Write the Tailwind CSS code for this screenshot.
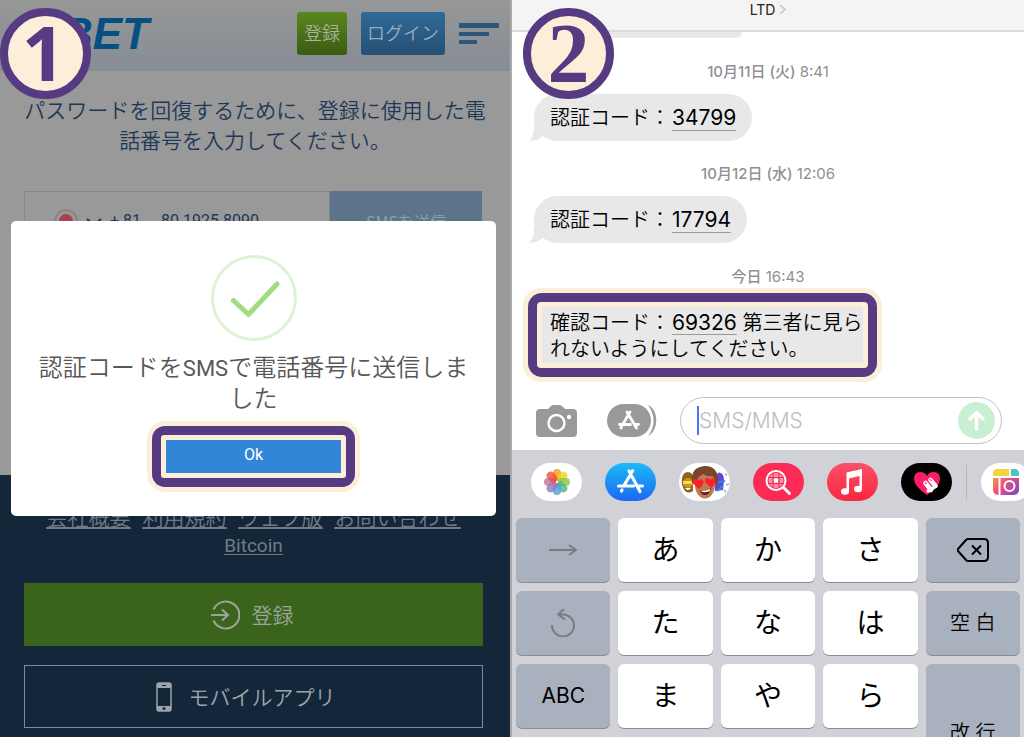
<!DOCTYPE html>
<html lang="ja">
<head>
<meta charset="utf-8">
<meta name="viewport" content="width=device-width, initial-scale=1">
<title>認証コード</title>
<script src="https://cdn.jsdelivr.net/npm/@tailwindcss/browser@4"></script>
</head>
<body class="bg-white">
<main class="grid h-screen grid-cols-2 overflow-hidden">

  <!-- Step 1: password recovery -->
  <section class="relative flex min-w-0 flex-col border-r-2 border-[#a9a9ab] bg-[#999] font-['Noto_Sans_CJK_JP',sans-serif] font-[350]">
    <header class="flex h-[71px] shrink-0 items-start bg-linear-to-b from-[#979797] to-[#868d94] pr-[11px] pl-[61px] pt-3">
      <a href="#" class="font-['Liberation_Sans',sans-serif] text-[44px] leading-[44px] font-bold text-[#064f83] italic">BET</a>
      <button class="ml-auto h-[43px] rounded-[3px] bg-linear-to-b from-[#5b8720] to-[#3a5b10] px-[7px] pb-1 text-lg text-[#a9b29c]">登録</button>
      <button class="ml-[14px] h-[43px] w-[84px] rounded-[3px] bg-linear-to-b from-[#2f6a98] to-[#264f74] pb-1 text-lg text-[#9dacb8]">ログイン</button>
      <button aria-label="メニュー" class="mt-[11px] ml-[14px] flex w-10 flex-col gap-1 text-[#2c577b]">
        <span class="h-[5px] w-10 bg-current"></span><span class="h-[4px] w-[30px] bg-current"></span><span class="h-[4px] w-[18px] bg-current"></span>
      </button>
    </header>
    <div class="flex-1 px-6 pt-[23px]">
      <p class="text-center text-[21px] leading-[30px] whitespace-nowrap text-[#1f3857]"><span class="-mx-2">パスワードを回復するために、登録に使用した電</span><br>話番号を入力してください。</p>
      <form class="mt-[37px] mr-1 flex h-[60px]">
        <div class="flex flex-1 items-center border border-[#7b8a8e] pl-[29px] text-[#1f3857]">
          <button type="button" aria-label="国番号" class="flex items-center">
            <svg class="size-6" viewBox="0 0 24 24"><circle cx="12" cy="12" r="11" fill="#999" stroke="#858585" stroke-width="2"/><circle cx="12" cy="12" r="7" fill="#a8404e"/></svg>
            <svg class="ml-2 h-3 w-4" viewBox="0 0 16 12" fill="none" stroke="currentColor" stroke-width="2"><path d="M1 4l7 6 7-6"/></svg>
            <span class="ml-2 font-['Roboto',sans-serif] text-base font-normal">+ 81</span>
          </button>
          <input type="tel" aria-label="電話番号" value="80 1925 8090" class="ml-5 w-32 font-['Roboto',sans-serif] text-base font-normal outline-none">
        </div>
        <button type="button" class="w-[152px] bg-[#5d7389] text-base text-[#8ea0b0]">SMSを送信</button>
      </form>
    </div>
    <footer class="shrink-0 bg-[#14263a] pt-[26px] pr-[27px] pb-[9px] pl-6 text-[#707b86]">
      <nav class="flex flex-wrap justify-center gap-x-3 text-[21px] leading-[30px] underline underline-offset-2">
        <a href="#">会社概要</a><a href="#">利用規約</a><a href="#">ウェブ版</a><a href="#">お問い合わせ</a><a href="#" class="font-['Roboto',sans-serif] text-[19px] leading-[30px] font-normal">Bitcoin</a>
      </nav>
      <button class="mt-[22px] flex h-[63px] w-full items-center justify-center gap-3 bg-[#3a641c] pr-1 text-[21px] text-[#9da59b]">
        <svg class="size-[30px]" viewBox="0 0 30 30" fill="none" stroke="currentColor" stroke-width="2"><path d="M3.500 9.500A13.500 13.500 0 1 1 3.500 20.500M1 15h17M12 9.500l6 5.500-6 5.500"/></svg>
        <span>登録</span>
      </button>
      <button class="mt-[19px] flex h-[63px] w-full items-center justify-center gap-[17px] border border-[#7e8994] pr-4 text-[21px] text-[#9da3a9]">
        <svg class="h-[30px] w-4" viewBox="0 0 16 30"><rect x="1" y="1" width="14" height="28" rx="2" fill="none" stroke="currentColor" stroke-width="1.500"/><path fill="currentColor" d="M1 1h14v5H1zM1 24h14v5H1z"/><path stroke="#14263a" d="M6 3.500h4"/><circle cx="8" cy="26.500" r="1.500" fill="#14263a"/></svg>
        <span>モバイルアプリ</span>
      </button>
    </footer>

    <div role="dialog" aria-label="送信完了" class="absolute top-[221px] right-[14px] left-[11px] flex h-[295px] flex-col items-center rounded-[5px] bg-white pt-[34px]">
      <svg class="size-[86px]" viewBox="0 0 86 86" fill="none"><circle cx="43" cy="43" r="41.500" stroke="#dff2d5" stroke-width="3"/><path d="M22.500 45.500L37.500 59.500 66 29" stroke="#a0dd80" stroke-width="5" stroke-linecap="round" stroke-linejoin="round"/></svg>
      <p class="mt-[9px] text-center text-2xl leading-[31px] whitespace-nowrap text-[#585858]">認証コードを<span class="font-['Roboto',sans-serif] text-[22px] leading-none font-normal">SMS</span>で電話番号に送信しま<br>した</p>
      <div class="mt-[9px] rounded-[18px] bg-[#fbefd9] p-[5px]">
        <div class="rounded-[13px] bg-[#563b82] p-[9px]">
          <div class="rounded-[3px] bg-[#fbefd9] p-[5px]">
            <button class="block h-[33px] w-[175px] bg-[#3186d8] pb-1 font-['Roboto',sans-serif] text-base leading-none font-normal text-white">Ok</button>
          </div>
        </div>
      </div>
    </div>
    <div class="absolute top-2 left-0 flex size-[91px] items-center justify-center rounded-full border-8 border-[#563b82] bg-[#fbefd9] pr-1 pb-1 font-['Noto_Sans',sans-serif] text-[76px] leading-none font-bold text-[#563b82]">1</div>
  </section>

  <!-- Step 2: messages -->
  <section class="relative flex min-w-0 flex-col bg-white font-['Inter','Noto_Sans_CJK_JP',sans-serif] text-black">
    <header class="flex h-8 shrink-0 items-start justify-center gap-1 border-b-2 border-[#dadadb] bg-[#f4f4f4] text-sm leading-5 text-[#222]">
      <span>LTD</span>
      <svg class="mt-1 h-[11px] w-[7px]" viewBox="0 0 7 11" fill="none" stroke="#c3c3c6" stroke-width="1.500"><path d="M1 1l5 4.500L1 10"/></svg>
    </header>
    <div class="flex flex-1 flex-col items-start">
      <div class="ml-[22px] h-[6px] w-[208px] rounded-br-[18px] bg-[#e8e8e8]"></div>
      <time class="mt-6 self-center text-[15px] leading-5 text-[#909094]"><span class="font-medium">10月11日 (火)</span> 8:41</time>
      <div class="relative mt-3 ml-[22px] flex h-[47px] items-center rounded-full bg-[#e8e8e8] px-4 text-xl">
        <svg class="absolute bottom-0 -left-[5px] h-[17px] w-6" viewBox="0 0 24 17"><path fill="#e8e8e8" d="M5 0C5 8 5 12 0 16.500 6 17 11 15 14 11.500L24 12V0z"/></svg>
        <p class="relative font-[350] whitespace-nowrap">認証コード：<a href="#" class="ml-0.5 border-b border-[#999] text-[21px] font-normal">34799</a></p>
      </div>
      <time class="mt-[23px] self-center text-[15px] leading-5 text-[#909094]"><span class="font-medium">10月12日 (水)</span> 12:06</time>
      <div class="relative mt-3 ml-[22px] flex h-[47px] items-center rounded-full bg-[#e8e8e8] px-4 text-xl">
        <svg class="absolute bottom-0 -left-[5px] h-[17px] w-6" viewBox="0 0 24 17"><path fill="#e8e8e8" d="M5 0C5 8 5 12 0 16.500 6 17 11 15 14 11.500L24 12V0z"/></svg>
        <p class="relative font-[350] whitespace-nowrap">認証コード：<a href="#" class="ml-0.5 border-b border-[#999] text-[21px] font-normal">17794</a></p>
      </div>
      <time class="mt-6 self-center text-[15px] leading-5 text-[#909094]"><span class="font-medium">今日</span> 16:43</time>
      <div class="mt-px ml-[11px] rounded-[18px] bg-[#fbefd9] p-[5px]">
        <div class="rounded-[14px] bg-[#563b82] p-[9px]">
          <div class="rounded-[4px] bg-[#fbefd9] p-[5px]">
            <p class="h-[56px] w-[321px] overflow-hidden bg-[#e8e8e8] pt-[3px] pl-2 text-xl leading-[26px] font-[350] whitespace-nowrap">確認コード：<a href="#" class="ml-0.5 text-[21px] leading-[26px] font-normal underline decoration-[#999] decoration-1 underline-offset-4">69326</a> 第三者に見ら<br>れないようにしてください。</p>
          </div>
        </div>
      </div>
    </div>

    <form class="mb-[6px] flex shrink-0 items-center pr-[22px] pl-6">
      <button type="button" aria-label="カメラ" class="shrink-0"><svg class="h-8 w-[41px]" viewBox="0 0 41 32"><path fill="#99999b" d="M4 4h8l3-3q1-1 3-1h5q2 0 3 1l3 3h8q4 0 4 4v20q0 4-4 4H4q-4 0-4-4V8q0-4 4-4z"/><circle cx="20.500" cy="18" r="8" fill="none" stroke="#fff" stroke-width="2.500"/><circle cx="33" cy="12" r="2.200" fill="#fff"/></svg></button>
      <button type="button" aria-label="アプリ" class="ml-[30px] shrink-0"><svg class="h-[33px] w-[50px]" viewBox="0 0 50 33" fill="none"><rect width="44" height="33" rx="16.500" fill="#99999b"/><path fill="#99999b" d="M41 1C52 6 52 26 41 32 49 22 48 10 41 1z"/><g stroke="#fff" stroke-width="2.800" stroke-linecap="round"><path d="M20 8l9.500 16M23 8l-7 12M12.500 20.500h11M28 20.500h3.500M14 24l.5-1"/></g></svg></button>
      <div class="ml-[23px] flex h-[47px] min-w-0 flex-1 items-center rounded-full border border-[#c2c2c4] pr-[6px] pl-4">
        <span class="h-[29px] w-[2px] shrink-0 bg-[#4f74f5]"></span>
        <input type="text" aria-label="メッセージ" placeholder="SMS/MMS" class="w-0 min-w-0 flex-1 text-[21px] font-light outline-none placeholder:text-[#bdbdbf]">
        <button type="button" aria-label="送信" class="shrink-0"><svg class="size-[37px]" viewBox="0 0 37 37"><circle cx="18.500" cy="18.500" r="18.500" fill="#c9efd2"/><path d="M18.500 27V11M12 17l6.500-6.500L25 17" fill="none" stroke="#fff" stroke-width="3.500" stroke-linecap="round" stroke-linejoin="round"/></svg></button>
      </div>
    </form>

    <div class="h-[287px] shrink-0 overflow-hidden bg-[#d1d2d8] px-1 pt-[13px]">
      <div class="flex items-center gap-[23px] pl-[15px]">
        <button aria-label="写真" class="shrink-0"><svg class="h-[38px] w-[51px]" viewBox="0 0 51 38"><rect width="51" height="38" rx="19" fill="#fff"/><g fill-opacity=".8"><rect x="22" y="6" width="8" height="12" rx="4" fill="#f7931e"/><rect x="22" y="6" width="8" height="12" rx="4" fill="#e6d81f" transform="rotate(45 26 19)"/><rect x="22" y="6" width="8" height="12" rx="4" fill="#8cc63f" transform="rotate(90 26 19)"/><rect x="22" y="6" width="8" height="12" rx="4" fill="#4bb58a" transform="rotate(135 26 19)"/><rect x="22" y="6" width="8" height="12" rx="4" fill="#5b9bd0" transform="rotate(180 26 19)"/><rect x="22" y="6" width="8" height="12" rx="4" fill="#8a78c0" transform="rotate(225 26 19)"/><rect x="22" y="6" width="8" height="12" rx="4" fill="#c0719f" transform="rotate(270 26 19)"/><rect x="22" y="6" width="8" height="12" rx="4" fill="#ef4a3a" transform="rotate(315 26 19)"/></g></svg></button>
        <button aria-label="App Store" class="shrink-0"><svg class="h-[38px] w-[51px]" viewBox="0 0 51 38"><defs><linearGradient id="as" x2="0" y2="1"><stop stop-color="#1cbaf8"/><stop offset="1" stop-color="#1c68f0"/></linearGradient></defs><rect width="51" height="38" rx="19" fill="url(#as)"/><g stroke="#fff" stroke-width="3.200" stroke-linecap="round"><path d="M24 8l11 20.500M27.500 8l-8.500 14.500M13.500 23h15M33.500 23h4M16.500 28l.5-1"/></g></svg></button>
        <button aria-label="ミー文字" class="shrink-0"><svg class="h-[38px] w-[51px]" viewBox="0 0 51 38"><rect width="51" height="38" rx="19" fill="#fff"/><path d="M3 15Q4 9 9 9t5 7v12q-4 3-8 0-4-5-3-13z" fill="#8e6418"/><circle cx="9" cy="20" r="5" fill="#c9941f"/><path d="M4 18h10v3H4z" fill="#f8df52"/><path d="M6 25q3 4 6 0z" fill="#fff"/><path d="M36 14q4-8 8-2l1 4-1 11-8 1z" fill="#5b4bd3"/><path d="M36 20l10-2M38 28l6-5" stroke="#3a83e8" stroke-width="2"/><path d="M46 11l2 1M47 22l3-1M45 27l2 2" stroke="#9fa5f2" stroke-width="1.500"/><ellipse cx="26" cy="22" rx="10" ry="13.500" fill="#c07a52"/><path d="M13 20Q11 4 26 3q14 0 13 17l-2 2q-1-6-4-9-5 1-9-2-6 3-8 11z" fill="#7a472a"/><path d="M21 27q6 2 11-2-1 7-6 7-4 0-5-5z" fill="#541c18"/><path d="M22 27.500q5 1 9-1.500v2q-4 2-8 1z" fill="#fff"/><path d="M20 26l-6-6q-1-4 3-4 2 0 2 2 2-3 5-1 2 4-4 9zM32 25l-6-6q-1-4 3-4 2 0 2 2 2-3 5-1 2 4-4 9z" fill="#ff1f25"/></svg></button>
        <button aria-label="画像検索" class="shrink-0"><svg class="h-[38px] w-[51px]" viewBox="0 0 51 38" fill="none"><rect width="51" height="38" rx="19" fill="#fb2b56"/><circle cx="23" cy="17.500" r="9.500" stroke="#fff" stroke-width="2"/><circle cx="23" cy="17.500" r="7.500" fill="#fff" fill-opacity=".5"/><path d="M15 14.500h16M15 20.500h16M20 10v15M26 10v15" stroke="#fb2b56" stroke-width="1.200"/><path d="M21 15.500h4v4h-4z" fill="#fff"/><path d="M30.500 24.500l6 6" stroke="#fff" stroke-width="3" stroke-linecap="round"/></svg></button>
        <button aria-label="ミュージック" class="shrink-0"><svg class="h-[38px] w-[51px]" viewBox="0 0 51 38"><defs><linearGradient id="mu" x2="0" y2="1"><stop stop-color="#fb5168"/><stop offset="1" stop-color="#fa2640"/></linearGradient></defs><rect width="51" height="38" rx="19" fill="url(#mu)"/><ellipse cx="18" cy="28.500" rx="4" ry="3.200" fill="#fff"/><ellipse cx="31" cy="26" rx="4" ry="3.200" fill="#fff"/><path d="M19.500 9.500L35 6v20h-2.500V13L22 15.500v13h-2.500z" fill="#fff"/></svg></button>
        <button aria-label="Digital Touch" class="shrink-0"><svg class="h-[38px] w-[51px]" viewBox="0 0 51 38"><rect width="51" height="38" rx="19" fill="#000"/><path d="M26 32Q13 23 13 16q0-7 6-7 5 0 7 4 2-4 7-4 6 0 6 7 0 7-13 16z" fill="#fb1d6b"/><path d="M24.500 20l5.500 7M29.500 17l5 6" stroke="#fff" stroke-width="4.500" stroke-linecap="round"/><path d="M26 29l5-5M31 26l5-4" stroke="#fff" stroke-width="3"/><path d="M24 19l1.500 2M29 16l1.500 2" stroke="#fb6d9a" stroke-width="2"/></svg></button>
        <span class="-ml-[9px] h-[35px] w-px shrink-0 bg-[#b4b5bb]"></span>
        <button aria-label="Layout" class="-ml-[9px] shrink-0"><svg class="h-[38px] w-[51px]" viewBox="0 0 51 38"><defs><linearGradient id="la" x2="1" y2="1"><stop stop-color="#f9c331"/><stop offset=".5" stop-color="#ec4f80"/><stop offset="1" stop-color="#7446c4"/></linearGradient></defs><rect width="51" height="38" rx="19" fill="#fff"/><rect x="12" y="6" width="26" height="26" rx="5" fill="url(#la)"/><path d="M12 13v-2q0-5 5-5h11v7z" fill="#f6d141"/><path d="M29 6h4q5 0 5 5v2h-9z" fill="#4ec6b8"/><path d="M12 14h26M18.500 14v18M29 6v8" stroke="#fff" stroke-width="2"/><circle cx="28.500" cy="23" r="5" fill="none" stroke="#fff" stroke-width="2"/></svg></button>
      </div>
      <div class="mt-[17px] grid auto-rows-[64px] grid-cols-5 gap-x-2 gap-y-[9px] text-[28px] *:rounded-[6px] *:shadow-[0_1px_0_#8b8c91]">
        <button aria-label="次候補" class="flex items-center justify-center bg-[#a9b0be] text-[#777d87]"><svg class="h-3 w-7" viewBox="0 0 28 12" fill="none" stroke="currentColor" stroke-width="1.800"><path d="M0 6h27M20 1l7 5-7 5"/></svg></button>
        <button class="bg-white">あ</button><button class="bg-white">か</button><button class="bg-white">さ</button>
        <button aria-label="削除" class="flex items-center justify-center bg-[#a9b0be]"><svg class="h-6 w-8" viewBox="0 0 32 24" fill="none" stroke="currentColor" stroke-width="2" stroke-linejoin="round"><path d="M11 1h16q4 0 4 4v14q0 4-4 4H11q-1 0-2-1L1 13q-1-1 0-2L9 2q1-1 2-1zM15 7.500l9 9M24 7.500l-9 9"/></svg></button>
        <button aria-label="元に戻す" class="flex items-center justify-center bg-[#a9b0be] text-[#777d87]"><svg class="h-7 w-6" viewBox="0 0 24 28" fill="none" stroke="currentColor" stroke-width="1.900"><path d="M1 16A11 11 0 1 0 12 5.500H8M13 0L7 5.500l7 5"/></svg></button>
        <button class="bg-white">た</button><button class="bg-white">な</button><button class="bg-white">は</button>
        <button class="bg-[#a9b0be] text-xl font-[350]">空 白</button>
        <button class="bg-[#a9b0be] text-[21px]">ABC</button>
        <button class="bg-white">ま</button><button class="bg-white">や</button><button class="bg-white">ら</button>
        <button class="row-span-2 bg-[#a9b0be] text-xl font-[350]">改 行</button>
      </div>
    </div>
    <div class="absolute top-2 left-[11px] flex size-[91px] items-center justify-center rounded-full border-8 border-[#563b82] bg-[#fbefd9] font-['Liberation_Serif',serif] text-[84px] leading-none font-bold text-[#563b82]">2</div>
  </section>
</main>
</body>
</html>
